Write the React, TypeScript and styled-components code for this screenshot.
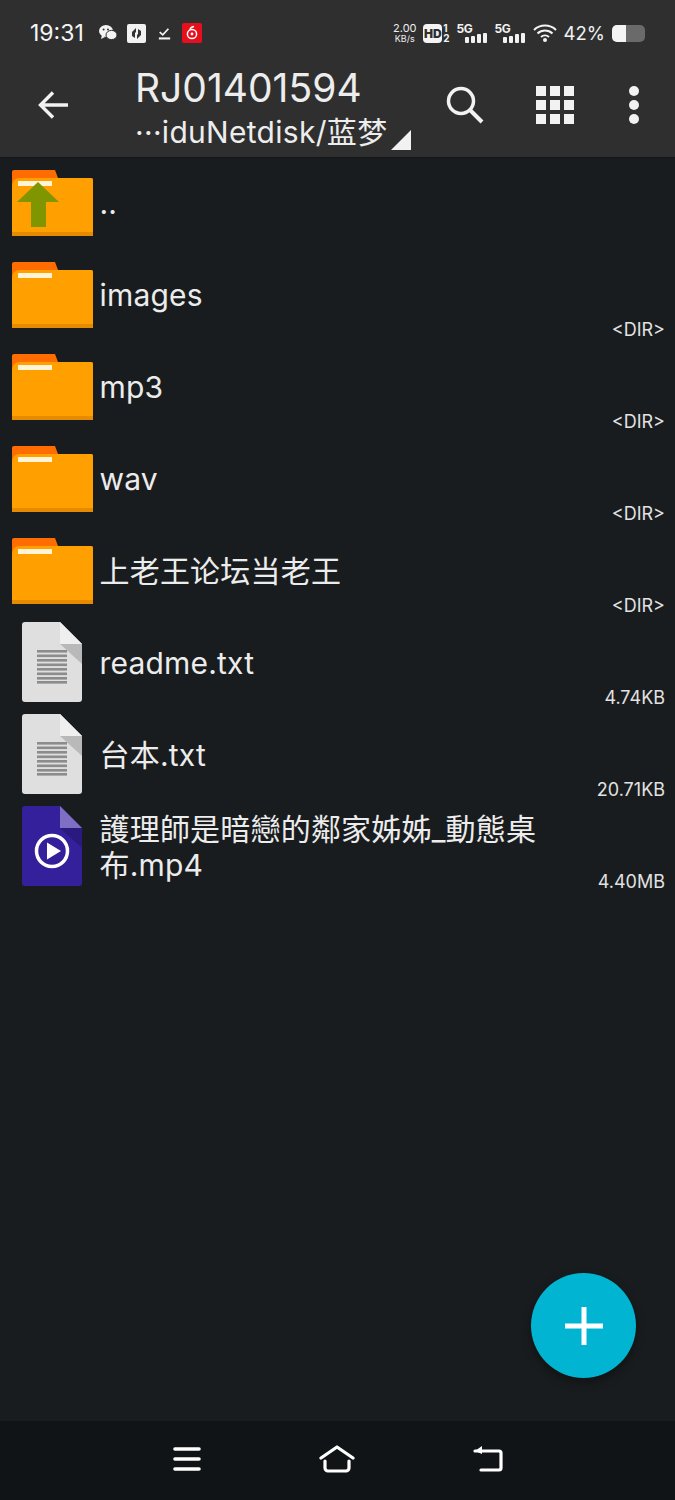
import styled, { createGlobalStyle } from 'styled-components';

const GlobalStyle = createGlobalStyle`
  html, body {
    margin: 0;
    padding: 0;
    background: #191c1e;
    font-family: Inter, "Noto Sans CJK SC", sans-serif;
  }
`;

const Page = styled.div`
  position: relative;
  display: flex;
  flex-direction: column;
  width: 675px;
  height: 1500px;
  overflow: hidden;
  background: #191c1e;
  color: #f2f2f2;
`;

const TopArea = styled.div`
  background: #2f2f2f;
  height: 157px;
  border-bottom: 1px solid #141617;
`;

const StatusBar = styled.div`
  display: flex;
  align-items: center;
  height: 66px;
  padding: 0 30px;
`;

const Time = styled.span`
  font-size: 23px;
  color: #f4f4f4;
  margin-right: 15px;
`;

const NotifyIcons = styled.div`
  display: flex;
  align-items: center;
  gap: 10px;
  flex: 1;
`;

const CheckIcon = styled.svg`
  margin-left: 2px;
  margin-right: 1px;
`;

const StatusRight = styled.div`
  display: flex;
  align-items: center;
  gap: 7px;
`;

const Speed = styled.div`
  display: flex;
  flex-direction: column;
  align-items: center;
  font-size: 11px;
  line-height: 11px;
  width: 23px;
  color: #eee;
`;

const SpeedUnit = styled.span`
  font-size: 9px;
  line-height: 9px;
`;

const HdBadge = styled.span`
  display: inline-block;
  background: #f4f4f4;
  color: #2f2f2f;
  font-size: 12px;
  font-weight: 900;
  line-height: 19px;
  height: 19px;
  width: 19px;
  text-align: center;
  border-radius: 4px;
`;

const HdGroup = styled.div`
  display: flex;
  align-items: center;
  gap: 1px;
`;

const SimDigits = styled.div`
  display: flex;
  flex-direction: column;
  font-size: 10px;
  line-height: 10px;
  font-weight: 700;
`;

const SignalGroup = styled.div`
  position: relative;
  width: 31px;
  height: 20px;
`;

const SignalLabel = styled.span`
  position: absolute;
  left: 0;
  top: 0;
  font-size: 12px;
  line-height: 11px;
  font-weight: 700;
  letter-spacing: -0.4px;
`;

const SignalBars = styled.svg`
  position: absolute;
  right: 1px;
  bottom: 0;
`;

const Percent = styled.span`
  font-size: 18.5px;
  color: #f0f0f0;
`;

const Battery = styled.div`
  width: 33px;
  height: 17px;
  border-radius: 5px;
  background: #6a6a6a;
  overflow: hidden;
`;

const BatteryFill = styled.div`
  height: 100%;
  background: #f4f4f4;
`;

const ActionBar = styled.div`
  display: flex;
  align-items: flex-start;
  height: 91px;
  padding-left: 38px;
`;

const BackButton = styled.svg`
  flex: none;
  margin-right: 67px;
  margin-top: 25px;
`;

const Titles = styled.div`
  width: 311px;
  flex: none;
`;

const Title = styled.div`
  font-size: 39px;
  line-height: 44px;
  color: #ededed;
`;

const Subtitle = styled.div`
  display: flex;
  align-items: flex-end;
  font-size: 30px;
  line-height: 44px;
  letter-spacing: 0.3px;
  color: #ededed;
  white-space: nowrap;
`;

const DropMark = styled.svg`
  margin-left: 4px;
  margin-bottom: 4px;
`;

const Actions = styled.div`
  display: flex;
  align-items: center;
  margin-top: 20px;
`;

const ActionIcon = styled.svg`
  display: block;
  margin-right: 52px;
`;

const KebabIcon = styled(ActionIcon)`
  margin-left: 2px;
  margin-right: 0;
`;

const FileList = styled.div`
  flex: 1;
`;

const Row = styled.div`
  display: flex;
  align-items: center;
  height: 92px;
  padding-right: 10px;
`;

const IconCell = styled.div`
  flex: none;
  width: 99.5px;
  display: flex;
  padding-left: ${(p) => p.$inset}px;
  box-sizing: border-box;
  margin-top: ${(p) => p.$shift}px;
`;

const FileName = styled.div`
  flex: 1;
  max-width: 450px;
  font-size: 30px;
  line-height: 36px;
  letter-spacing: 0.2px;
  color: #ececec;
  margin-top: -3px;
`;

const FileSize = styled.div`
  margin-left: auto;
  align-self: flex-end;
  margin-bottom: 2px;
  font-size: 18px;
  line-height: 20px;
  color: #e2e2e2;
`;

const Fab = styled.button`
  position: absolute;
  left: 531px;
  top: 1273px;
  width: 105px;
  height: 105px;
  padding: 0;
  border: none;
  border-radius: 50%;
  background: #00b4d2;
  box-shadow: 0 4px 10px rgba(0, 0, 0, 0.4);
  display: flex;
  align-items: center;
  justify-content: center;
`;

const NavBar = styled.div`
  flex: none;
  height: 79px;
  background: #111416;
  display: flex;
  align-items: center;
  justify-content: center;
  gap: 118px;
  padding-bottom: 3px;
  box-sizing: border-box;
`;

const FolderIcon = ({ up = false }: { up?: boolean }) => (
  <svg width="81" height="66" viewBox="0 0 81 66">
    <path d="M0 2a2 2 0 0 1 2-2h41l3 8h33a2 2 0 0 1 2 2v51H0z" fill="#ff6d00" />
    <path d="M0 17Q0 8 8 8h71a2 2 0 0 1 2 2v52H0z" fill="#ffa000" />
    <rect x="0" y="62" width="81" height="4" fill="#e68a00" />
    <rect x="6" y="11" width="34" height="5" fill="#fff3d8" />
    {up && <path d="M26 12L47 32H34v25H19V32H5z" fill="#7f9600" />}
  </svg>
);

const TextFileIcon = () => (
  <svg width="60" height="80" viewBox="0 0 60 80">
    <path d="M3 0h35l22 22v55a3 3 0 0 1-3 3H3a3 3 0 0 1-3-3V3a3 3 0 0 1 3-3z" fill="#dfdfdf" />
    <path d="M38 0l22 22H38z" fill="#efefef" />
    <path d="M38 22h22v20z" fill="#b9b9b9" />
    {[28, 32.5, 37, 41.5, 46, 50.5, 55, 59].map((y) => (
      <rect key={y} x="15" y={y} width="30" height="2.6" fill="#8c8c8c" />
    ))}
  </svg>
);

const VideoFileIcon = () => (
  <svg width="60" height="80" viewBox="0 0 60 80">
    <path d="M3 0h35l22 22v55a3 3 0 0 1-3 3H3a3 3 0 0 1-3-3V3a3 3 0 0 1 3-3z" fill="#33209a" />
    <path d="M38 0l22 22H38z" fill="#7f6fc4" />
    <path d="M38 22h22v20z" fill="#2a1a80" />
    <circle cx="30" cy="45" r="15.5" fill="none" stroke="#fff" strokeWidth="3.5" />
    <path d="M25 36.5L39 45l-14 8.5z" fill="#fff" />
  </svg>
);

const rows = [
  { name: 'images', size: '<DIR>', icon: 'folder' },
  { name: 'mp3', size: '<DIR>', icon: 'folder' },
  { name: 'wav', size: '<DIR>', icon: 'folder' },
  { name: '上老王论坛当老王', size: '<DIR>', icon: 'folder' },
  { name: 'readme.txt', size: '4.74KB', icon: 'text' },
  { name: '台本.txt', size: '20.71KB', icon: 'text' },
  { name: '護理師是暗戀的鄰家姊姊_動態桌布.mp4', size: '4.40MB', icon: 'video' },
];

const Signal = () => (
  <SignalGroup>
    <SignalLabel>5G</SignalLabel>
    <SignalBars width="22" height="10" viewBox="0 0 22 10">
      <rect x="0" y="4" width="4" height="6" rx="1" fill="#f2f2f2" />
      <rect x="6" y="3" width="4" height="7" rx="1" fill="#f2f2f2" />
      <rect x="12" y="1" width="4" height="9" rx="1" fill="#f2f2f2" />
      <rect x="18" y="0" width="4" height="10" rx="1" fill="#f2f2f2" />
    </SignalBars>
  </SignalGroup>
);

export default function App(): JSX.Element {
  return (
    <>
      <GlobalStyle />
      <Page>
        <TopArea>
          <StatusBar>
            <Time>19:31</Time>
            <NotifyIcons>
              <svg width="18" height="16" viewBox="0 0 18 16">
                <ellipse cx="7" cy="6" rx="7" ry="6" fill="#f4f4f4" />
                <ellipse cx="12.5" cy="10" rx="5.5" ry="4.6" fill="#f4f4f4" stroke="#2f2f2f" strokeWidth="1" />
                <path d="M3 10l-1 4 4-2z" fill="#f4f4f4" />
                <circle cx="4.6" cy="4.5" r="1" fill="#2f2f2f" />
                <circle cx="9" cy="4.5" r="1" fill="#2f2f2f" />
              </svg>
              <svg width="19" height="19" viewBox="0 0 19 19">
                <rect width="19" height="19" rx="2" fill="#f2f2f2" />
                <path d="M9 4L5 8v4l3 2V9l1-1zM10 15l4-4V7l-3-2v5l-1 1z" fill="#333" />
              </svg>
              <CheckIcon width="13" height="15" viewBox="0 0 15 15">
                <path d="M2 6l3.500 3L12 2" fill="none" stroke="#f4f4f4" strokeWidth="2" />
                <rect x="1" y="12" width="13" height="2.400" fill="#f4f4f4" />
              </CheckIcon>
              <svg width="20" height="20" viewBox="0 0 20 20">
                <rect width="20" height="20" rx="2" fill="#e60f1c" />
                <circle cx="10" cy="11" r="4.600" fill="none" stroke="#fff" strokeWidth="1.500" />
                <circle cx="10" cy="11" r="1.400" fill="#fff" />
                <path d="M12 3.500C9 4 8 5.500 8 7" fill="none" stroke="#fff" strokeWidth="1.500" />
              </svg>
            </NotifyIcons>
            <StatusRight>
              <Speed>
                2.00
                <SpeedUnit>KB/s</SpeedUnit>
              </Speed>
              <HdGroup>
                <HdBadge>HD</HdBadge>
                <SimDigits>
                  <span>1</span>
                  <span>2</span>
                </SimDigits>
              </HdGroup>
              <Signal />
              <Signal />
              <svg width="24" height="18" viewBox="0 0 24 18">
                <path d="M1 6a16 16 0 0 1 22 0M4.500 9.500a11 11 0 0 1 15 0M8 13a6 6 0 0 1 8 0" fill="none" stroke="#f4f4f4" strokeWidth="2" />
                <circle cx="12" cy="16" r="2" fill="#f4f4f4" />
              </svg>
              <Percent>42%</Percent>
              <Battery>
                <BatteryFill style={{ width: '42%' }} />
              </Battery>
            </StatusRight>
          </StatusBar>
          <ActionBar>
            <BackButton width="30" height="28" viewBox="0 0 30 28">
              <path d="M30 14H3M15 1.500L2.500 14 15 26.500" fill="none" stroke="#f2f2f2" strokeWidth="3.400" />
            </BackButton>
            <Titles>
              <Title>RJ01401594</Title>
              <Subtitle>
                ···iduNetdisk/蓝梦
                <DropMark width="20" height="20" viewBox="0 0 20 20">
                  <path d="M20 0v20H0z" fill="#f2f2f2" />
                </DropMark>
              </Subtitle>
            </Titles>
            <Actions>
              <ActionIcon width="38" height="38" viewBox="0 0 38 38">
                <circle cx="15" cy="15" r="12.500" fill="none" stroke="#f2f2f2" strokeWidth="3.500" />
                <path d="M24 24l12 12" fill="none" stroke="#f2f2f2" strokeWidth="4" />
              </ActionIcon>
              <ActionIcon width="38" height="38" viewBox="0 0 38 38">
                {[0, 14, 28].map((y) =>
                  [0, 14, 28].map((x) => <rect key={`${x}-${y}`} x={x} y={y} width="10" height="10" fill="#f2f2f2" />),
                )}
              </ActionIcon>
              <KebabIcon width="12" height="38" viewBox="0 0 12 38">
                <circle cx="6" cy="5" r="5" fill="#f2f2f2" />
                <circle cx="6" cy="19" r="5" fill="#f2f2f2" />
                <circle cx="6" cy="33" r="5" fill="#f2f2f2" />
              </KebabIcon>
            </Actions>
          </ActionBar>
        </TopArea>
        <FileList>
          <Row>
            <IconCell $inset={12} $shift={-2}>
              <FolderIcon up />
            </IconCell>
            <FileName>..</FileName>
          </Row>
          {rows.map((row) => (
            <Row key={row.name}>
              {row.icon === 'folder' ? (
                <IconCell $inset={12} $shift={-2}>
                  <FolderIcon />
                </IconCell>
              ) : (
                <IconCell $inset={22} $shift={-4}>
                  {row.icon === 'text' ? <TextFileIcon /> : <VideoFileIcon />}
                </IconCell>
              )}
              <FileName>{row.name}</FileName>
              <FileSize>{row.size}</FileSize>
            </Row>
          ))}
        </FileList>
        <Fab aria-label="add">
          <svg width="38" height="38" viewBox="0 0 38 38">
            <path d="M19 0v38M0 19h38" stroke="#fff" strokeWidth="5" />
          </svg>
        </Fab>
        <NavBar>
          <svg width="28" height="24" viewBox="0 0 28 24">
            <path d="M2 2h24M2 12h24M2 22h24" stroke="#fff" strokeWidth="3.600" strokeLinecap="round" />
          </svg>
          <svg width="36" height="28" viewBox="0 0 36 28">
            <path d="M2 13L18 2l16 11" fill="none" stroke="#fff" strokeWidth="3.200" strokeLinecap="round" strokeLinejoin="round" />
            <path d="M6 16v7a3 3 0 0 0 3 3h18a3 3 0 0 0 3-3v-7" fill="none" stroke="#fff" strokeWidth="3.200" strokeLinecap="round" />
          </svg>
          <svg width="30" height="28" viewBox="0 0 30 28">
            <path d="M2 6h24a2 2 0 0 1 2 2v15a2 2 0 0 1-2 2H8" fill="none" stroke="#fff" strokeWidth="3.200" strokeLinecap="round" />
            <path d="M9 1L2 6l7 3z" fill="#fff" />
          </svg>
        </NavBar>
      </Page>
    </>
  );
}
